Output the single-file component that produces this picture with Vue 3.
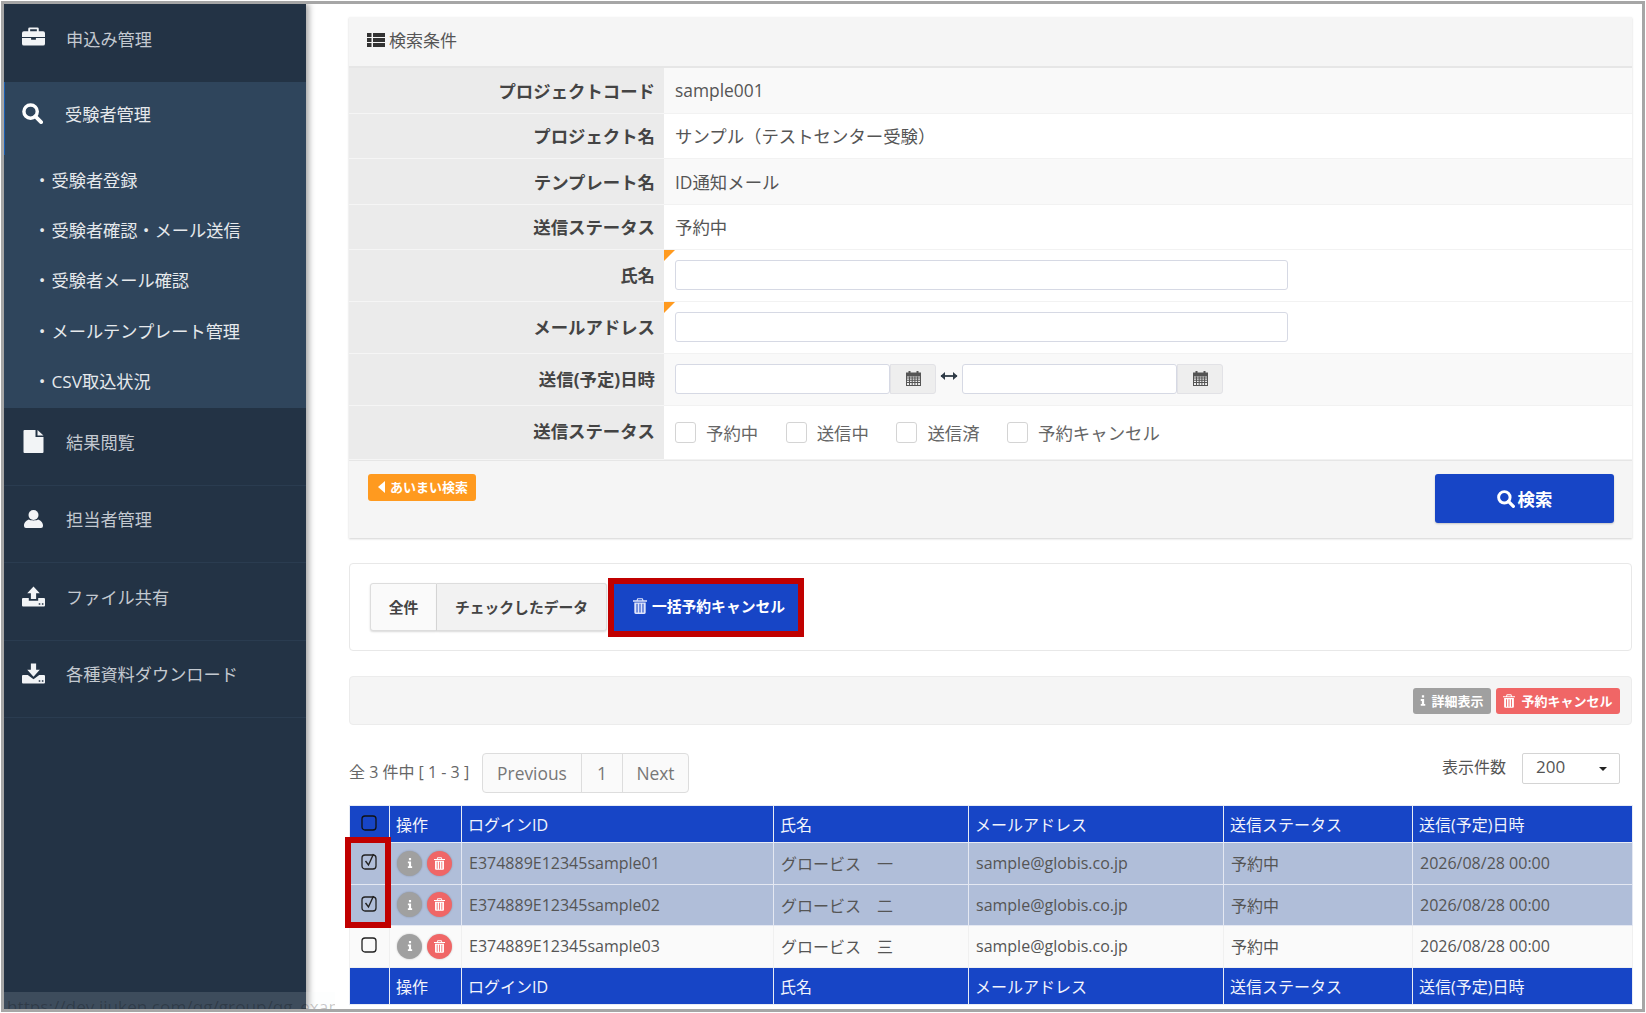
<template>
  <div class="frame">
    <svg class="defs" width="0" height="0" aria-hidden="true">
      <symbol id="i-briefcase" viewBox="0 0 24 19">
        <path fill="currentColor" fill-rule="evenodd" d="M8 0h8a1.5 1.5 0 0 1 1.5 1.5V4H22a2 2 0 0 1 2 2v4H0V6a2 2 0 0 1 2-2h4.500V1.500A1.500 1.500 0 0 1 8 0zm.5 2v2h7V2z" />
        <path fill="currentColor" d="M0 11h9.500v2h5v-2H24v6a2 2 0 0 1-2 2H2a2 2 0 0 1-2-2z" />
      </symbol>
      <symbol id="i-search" viewBox="0 0 22 22">
        <circle cx="9" cy="9" r="7" fill="none" stroke="currentColor" stroke-width="3.600" />
        <path d="M14 14l6 6" stroke="currentColor" stroke-width="4" stroke-linecap="round" />
      </symbol>
      <symbol id="i-file" viewBox="0 0 20 23">
        <path fill="currentColor" d="M1 0h11v7h8v15a1 1 0 0 1-1 1H1a1 1 0 0 1-1-1V1a1 1 0 0 1 1-1zm13 0l6 5.500h-6z" />
      </symbol>
      <symbol id="i-user" viewBox="0 0 19 18">
        <ellipse cx="9.500" cy="5" rx="5" ry="5" fill="currentColor" />
        <path fill="currentColor" d="M0 15.500C0 12 3 10 5 9.500c1.200 1.200 7.800 1.200 9 0 2 .5 5 2.500 5 6V16a2 2 0 0 1-2 2H2a2 2 0 0 1-2-2z" />
      </symbol>
      <symbol id="i-upload" viewBox="0 0 22 19">
        <path fill="currentColor" d="M11 0l6 6.500h-3.500V12h-5V6.500H5z" />
        <path fill="currentColor" fill-rule="evenodd" d="M1 11h5.500v2.500h9V11H21a1 1 0 0 1 1 1v6a1 1 0 0 1-1 1H1a1 1 0 0 1-1-1v-6a1 1 0 0 1 1-1zm15 5v1.300h1.500V16zm3 0v1.300h1.500V16z" />
      </symbol>
      <symbol id="i-download" viewBox="0 0 22 19">
        <path fill="currentColor" d="M11 12.500l6-6.500h-3.500V0h-5v6H5z" />
        <path fill="currentColor" fill-rule="evenodd" d="M1 11h4.500l5.500 4 5.500-4H21a1 1 0 0 1 1 1v6a1 1 0 0 1-1 1H1a1 1 0 0 1-1-1v-6a1 1 0 0 1 1-1zm15 5v1.300h1.500V16zm3 0v1.300h1.500V16z" />
      </symbol>
      <symbol id="i-list" viewBox="0 0 18 14">
        <path fill="currentColor" d="M0 0h4.500v4H0zm6 0h12v4H6zM0 5h4.500v4H0zm6 0h12v4H6zM0 10h4.500v4H0zm6 0h12v4H6z" />
      </symbol>
      <symbol id="i-calendar" viewBox="0 0 15 15">
        <path fill="currentColor" fill-rule="evenodd" d="M2.500 0h2v1.500h6V0h2v1.500H15V15H0V1.500h2.500zM1 5.500V14h13V5.500z" />
        <path fill="currentColor" d="M1 6.500h13v1H1zm0 2.200h13v1H1zm0 2.200h13v1H1zM3 5.500h1V14H3zm2.700 0h1V14h-1zm2.700 0h1V14h-1zm2.700 0h1V14h-1z" />
      </symbol>
      <symbol id="i-trash" viewBox="0 0 16 18">
        <path fill="currentColor" fill-rule="evenodd" d="M5 0h6l1 2.500h4V4H0V2.500h4zm.8 1.200l-.4 1.300h5.200l-.4-1.300z" />
        <path fill="currentColor" fill-rule="evenodd" d="M1.500 5h13v11.500a1.500 1.500 0 0 1-1.500 1.500H3a1.500 1.500 0 0 1-1.500-1.500zm2.500 1.500V16.500h1.200V6.500zm3.400 0V16.500h1.200V6.500zm3.400 0V16.500H12V6.500z" />
      </symbol>
      <symbol id="i-info" viewBox="0 0 8 14">
        <path fill="currentColor" d="M2.500 0h3v3h-3zM1 5h4.500v6.500H7V14H1v-2.500h1.500V7.500H1z" />
      </symbol>
    </svg>

    <aside class="sidebar">
      <nav>
        <a class="nav-item nav-first">
          <svg class="nav-icon icon-briefcase"><use href="#i-briefcase" /></svg>
          <span>申込み管理</span>
        </a>
        <div class="nav-group">
          <a class="nav-item nav-active">
            <svg class="nav-icon"><use href="#i-search" /></svg>
            <span>受験者管理</span>
          </a>
          <a v-for="s in subItems" :key="s" class="nav-sub">{{ s }}</a>
        </div>
        <a v-for="n in navItems" :key="n.label" class="nav-item nav-line">
          <svg class="nav-icon" :class="n.cls"><use :href="n.icon" /></svg>
          <span>{{ n.label }}</span>
        </a>
      </nav>
    </aside>

    <main class="main">
      <section class="search-panel">
        <header class="panel-head">
          <svg class="list-icon"><use href="#i-list" /></svg>
          <span>検索条件</span>
        </header>

        <div v-for="(r, i) in infoRows" :key="r.label" class="row row-text" :class="{ odd: i % 2 === 0 }">
          <div class="row-label">{{ r.label }}</div>
          <div class="row-value">{{ r.value }}</div>
        </div>

        <div class="row row-input">
          <div class="row-label">氏名</div>
          <div class="row-value has-flag"><input class="text-input" type="text" /></div>
        </div>
        <div class="row row-input">
          <div class="row-label">メールアドレス</div>
          <div class="row-value has-flag"><input class="text-input" type="text" /></div>
        </div>
        <div class="row row-input odd">
          <div class="row-label">送信(予定)日時</div>
          <div class="row-value date-range">
            <input class="date-input" type="text" />
            <span class="date-btn"><svg><use href="#i-calendar" /></svg></span>
            <svg class="range-arrow" viewBox="0 0 18 10">
              <path d="M1 5h16" stroke="#2f3b47" stroke-width="1.800" />
              <path d="M5 1L0.500 5 5 9zM13 1l4.500 4L13 9z" fill="#2f3b47" />
            </svg>
            <input class="date-input" type="text" />
            <span class="date-btn"><svg><use href="#i-calendar" /></svg></span>
          </div>
        </div>
        <div class="row row-check">
          <div class="row-label">送信ステータス</div>
          <div class="row-value checks">
            <label v-for="c in statusChecks" :key="c" class="check">
              <span class="check-box"></span>{{ c }}
            </label>
          </div>
        </div>

        <footer class="panel-foot">
          <span class="fuzzy-badge"><i class="caret-left"></i>あいまい検索</span>
          <button class="search-btn">
            <svg><use href="#i-search" /></svg>検索
          </button>
        </footer>
      </section>

      <section class="scope-panel">
        <button class="scope-btn scope-all">全件</button>
        <button class="scope-btn scope-checked">チェックしたデータ</button>
        <button class="bulk-btn">
          <svg><use href="#i-trash" /></svg>一括予約キャンセル
        </button>
      </section>

      <section class="legend-panel">
        <span class="legend legend-gray"><svg class="legend-info"><use href="#i-info" /></svg>詳細表示</span>
        <span class="legend legend-red"><svg class="legend-trash"><use href="#i-trash" /></svg>予約キャンセル</span>
      </section>

      <div class="pager-row">
        <span class="count">全 3 件中 [ 1 - 3 ]</span>
        <div class="pagination">
          <a class="page-prev">Previous</a>
          <a class="page-num">1</a>
          <a class="page-next">Next</a>
        </div>
        <div class="per-page">
          <span class="per-label">表示件数</span>
          <div class="select"><span class="select-value">200</span><i class="caret-down"></i></div>
        </div>
      </div>

      <div class="table-wrap">
        <table class="result">
          <colgroup>
            <col v-for="w in colWidths" :key="w.id" :style="{ width: w.px + 'px' }" />
          </colgroup>
          <thead>
            <tr>
              <th class="cell-check">
                <svg class="cb" viewBox="0 0 18 18"><rect x="2" y="3" width="14" height="14" rx="3" fill="none" stroke="#111" stroke-width="1.300" /></svg>
              </th>
              <th v-for="h in headers" :key="h">{{ h }}</th>
            </tr>
          </thead>
          <tbody>
            <tr v-for="r in rows" :key="r.id" :class="{ selected: r.selected }">
              <td class="cell-check">
                <svg class="cb" viewBox="0 0 18 18">
                  <rect x="2" y="3" width="14" height="14" rx="3" fill="none" stroke="#222" stroke-width="1.300" />
                  <path v-if="r.selected" d="M5.500 9l3 4 5-11" fill="none" stroke="#222" stroke-width="1.400" />
                </svg>
              </td>
              <td class="cell-ops">
                <span class="op op-info"><svg><use href="#i-info" /></svg></span>
                <span class="op op-del"><svg><use href="#i-trash" /></svg></span>
              </td>
              <td>{{ r.id }}</td>
              <td>{{ r.name }}</td>
              <td>sample@globis.co.jp</td>
              <td>予約中</td>
              <td>2026/08/28 00:00</td>
            </tr>
          </tbody>
          <tfoot>
            <tr>
              <th></th>
              <th v-for="h in headers" :key="h">{{ h }}</th>
            </tr>
          </tfoot>
        </table>
        <div class="check-highlight"></div>
      </div>
    </main>

    <div class="status-url">https://dev.jiuken.com/qg/group/qg_exam/</div>
  </div>
</template>

<script setup>
const subItems = ['受験者登録', '受験者確認・メール送信', '受験者メール確認', 'メールテンプレート管理', 'CSV取込状況']

const navItems = [
  { label: '結果閲覧', icon: '#i-file', cls: '' },
  { label: '担当者管理', icon: '#i-user', cls: 'icon-user' },
  { label: 'ファイル共有', icon: '#i-upload', cls: '' },
  { label: '各種資料ダウンロード', icon: '#i-download', cls: '' },
]

const infoRows = [
  { label: 'プロジェクトコード', value: 'sample001' },
  { label: 'プロジェクト名', value: 'サンプル（テストセンター受験）' },
  { label: 'テンプレート名', value: 'ID通知メール' },
  { label: '送信ステータス', value: '予約中' },
]

const statusChecks = ['予約中', '送信中', '送信済', '予約キャンセル']

const colWidths = [
  { id: 'check', px: 40 },
  { id: 'ops', px: 72 },
  { id: 'login', px: 312 },
  { id: 'name', px: 195 },
  { id: 'mail', px: 255 },
  { id: 'status', px: 189 },
  { id: 'date', px: 220 },
]

const headers = ['操作', 'ログインID', '氏名', 'メールアドレス', '送信ステータス', '送信(予定)日時']

const rows = [
  { id: 'E374889E12345sample01', name: 'グロービス　一', selected: true },
  { id: 'E374889E12345sample02', name: 'グロービス　二', selected: true },
  { id: 'E374889E12345sample03', name: 'グロービス　三', selected: false },
]
</script>

<style>
html,
body {
  margin: 0;
  background: #fff;
}
</style>

<style scoped>
.frame {
  position: relative;
  box-sizing: border-box;
  width: 1644px;
  height: 1011px;
  margin: 1px;
  border: 3px solid #a6a6a6;
  display: flex;
  overflow: hidden;
  background: #fff;
  font-family: "Open Sans", "Noto Sans CJK JP", sans-serif;
  font-size: 17.400px;
  color: #555;
}

.defs {
  position: absolute;
}

/* sidebar */
.sidebar {
  flex: none;
  width: 302px;
  background: #233345;
  box-shadow: 3px 0 6px rgba(0, 0, 0, 0.35);
  z-index: 1;
  font-size: 17.200px;
}

.nav-item {
  box-sizing: border-box;
  display: flex;
  align-items: center;
  height: 77.500px;
  padding: 0 0 10px 18px;
  color: #c3c9d0;
}

.nav-first {
  height: 78px;
}

.nav-line {
  border-bottom: 1px solid #2a3c50;
}

.nav-icon {
  flex: none;
  width: 23px;
  height: 23px;
  margin-right: 21px;
  color: #f2f4f6;
}

.icon-briefcase {
  margin-top: -3px;
}

.icon-user {
  width: 19px;
  height: 18px;
  margin-left: 2px;
  margin-right: 23px;
}

.nav-group {
  background: #2f455c;
  height: 326px;
}

.nav-active {
  height: 73px;
  padding-bottom: 10px;
  color: #e6e9ec;
  border-left: 1px solid #1a5fb4;
  padding-left: 17px;
}

.nav-active .nav-icon {
  width: 21px;
  height: 21px;
  margin-right: 22px;
  color: #fff;
}

.nav-sub {
  box-sizing: border-box;
  display: flex;
  align-items: center;
  height: 50.200px;
  padding: 0 0 1px 29.500px;
  color: #e6e9ec;
}

.nav-sub::before {
  content: "・";
  width: 18px;
}

/* main column */
.main {
  flex: 1;
  min-width: 0;
  padding: 13px 10px 0 43px;
}

.search-panel {
  background: #f5f5f5;
  box-shadow: 0 1px 2px rgba(0, 0, 0, 0.18);
}

.panel-head {
  box-sizing: border-box;
  display: flex;
  align-items: center;
  height: 51px;
  padding: 0 18px 4px;
  border-bottom: 2px solid #e6e6e6;
  color: #555;
  font-size: 17px;
}

.list-icon {
  width: 18px;
  height: 14px;
  margin-right: 4px;
  color: #333;
}

.row {
  box-sizing: border-box;
  display: grid;
  grid-template-columns: 315px 1fr;
  background: #fff;
}

.row.odd {
  background: #f9f9f9;
}

.row-text {
  height: 45.500px;
}

.row-input {
  height: 52px;
}

.row-check {
  height: 54px;
}

.row-label {
  display: flex;
  align-items: center;
  justify-content: flex-end;
  padding-right: 9px;
  background: #ebebeb;
  border-bottom: 1px solid #f5f5f5;
  font-weight: 700;
  color: #444;
}

.row-value {
  position: relative;
  display: flex;
  align-items: center;
  padding-left: 11px;
  border-bottom: 1px solid #f2f2f2;
}

.row-input .row-label,
.row-input .row-value {
  padding-bottom: 2px;
}

.row-check .row-label {
  padding-bottom: 4px;
}

.has-flag::before {
  content: "";
  position: absolute;
  left: 0;
  top: 0;
  border-top: 11px solid #ff9a1f;
  border-right: 11px solid transparent;
}

.text-input,
.date-input {
  box-sizing: border-box;
  height: 30px;
  padding: 0 8px;
  background: #fff;
  border: 1px solid #d6d9e4;
  border-radius: 3px;
  outline: none;
}

.text-input {
  width: 613px;
}

.date-input {
  width: 215px;
}

.date-btn {
  box-sizing: border-box;
  display: flex;
  align-items: center;
  justify-content: center;
  width: 46px;
  height: 30px;
  background: #eee;
  border: 1px solid #e2e2e6;
  border-radius: 0 3px 3px 0;
  color: #555;
}

.date-btn svg {
  width: 15px;
  height: 15px;
}

.range-arrow {
  width: 18px;
  height: 10px;
  margin: -6px 4px 0 4px;
}

.checks {
  gap: 27.500px;
}

.check {
  display: flex;
  align-items: center;
  color: #666;
}

.check-box {
  box-sizing: border-box;
  width: 21px;
  height: 21px;
  margin-right: 10px;
  background: #fff;
  border: 1px solid #d4d4d4;
  border-radius: 3px;
}

.panel-foot {
  box-sizing: border-box;
  display: flex;
  justify-content: space-between;
  align-items: flex-start;
  height: 78px;
  padding: 13px 18px 0 19px;
  border-top: 1px solid #e6e6e6;
}

.fuzzy-badge {
  display: flex;
  align-items: center;
  height: 27px;
  padding: 0 8px 2px 10px;
  box-sizing: border-box;
  background: #ff9a1f;
  border-radius: 3px;
  color: #fff;
  font-size: 13px;
  font-weight: 700;
}

.caret-left {
  width: 0;
  height: 0;
  margin-right: 5px;
  border-top: 6px solid transparent;
  border-bottom: 6px solid transparent;
  border-right: 7px solid #fff;
}

.search-btn {
  display: flex;
  align-items: center;
  justify-content: center;
  width: 179px;
  height: 49px;
  background: #1745c6;
  border: 0;
  border-radius: 3px;
  color: #fff;
  font: inherit;
  font-weight: 700;
  box-shadow: 0 1px 2px rgba(0, 0, 0, 0.2);
}

.search-btn svg {
  width: 18px;
  height: 18px;
  margin-right: 3px;
}

.scope-panel {
  box-sizing: border-box;
  display: flex;
  align-items: center;
  height: 88px;
  margin-top: 25px;
  padding-left: 20px;
  background: #fff;
  border: 1px solid #e8e8e8;
  border-radius: 4px;
}

.scope-btn {
  height: 48px;
  padding: 0 0 2px;
  border: 1px solid #ddd;
  font: inherit;
  font-size: 14.800px;
  font-weight: 700;
  color: #444;
  box-shadow: 0 1px 2px rgba(0, 0, 0, 0.15);
}

.scope-all {
  width: 67px;
  background: #fafafa;
  border-radius: 3px 0 0 3px;
}

.scope-checked {
  width: 170px;
  background: #f2f2f2;
  border-left: 0;
  border-radius: 0 3px 3px 0;
}

.bulk-btn {
  box-sizing: border-box;
  display: flex;
  align-items: center;
  justify-content: center;
  width: 196px;
  height: 59px;
  margin-left: 1px;
  padding: 0 0 3px 6px;
  background: #1745c6;
  border: 6px solid #c00000;
  color: #fff;
  font: inherit;
  font-size: 14.800px;
  font-weight: 700;
}

.bulk-btn svg {
  width: 14px;
  height: 16px;
  margin-right: 5px;
  color: #dfe4fa;
}

.legend-panel {
  box-sizing: border-box;
  display: flex;
  align-items: center;
  justify-content: flex-end;
  gap: 5px;
  height: 49px;
  margin-top: 25px;
  padding-right: 11px;
  background: #f5f5f5;
  border: 1px solid #ececec;
  border-radius: 4px;
}

.legend {
  display: flex;
  align-items: center;
  justify-content: center;
  height: 26px;
  border-radius: 3px;
  color: #fff;
  font-size: 13px;
  font-weight: 700;
}

.legend-gray {
  width: 78px;
  background: #a0a0a0;
}

.legend-red {
  width: 124px;
  background: #f06666;
}

.legend-info {
  width: 6px;
  height: 11px;
  margin-right: 5px;
}

.legend-trash {
  width: 12px;
  height: 14px;
  margin-right: 6px;
}

.pager-row {
  display: flex;
  align-items: center;
  height: 40px;
  margin-top: 28px;
}

.count {
  width: 133px;
  padding-bottom: 4px;
  font-size: 16px;
  color: #666;
}

.pagination {
  display: flex;
  box-sizing: border-box;
  height: 40px;
  background: #fafafa;
  border: 1px solid #ddd;
  border-radius: 4px;
  color: #777;
  line-height: 38px;
  text-align: center;
}

.page-prev {
  width: 98px;
  border-right: 1px solid #ddd;
}

.page-num {
  width: 40px;
  border-right: 1px solid #ddd;
}

.page-next {
  width: 65px;
}

.per-page {
  display: flex;
  align-items: center;
  align-self: flex-start;
  margin-left: auto;
  margin-right: 12px;
  font-size: 16px;
  color: #555;
}

.per-label {
  padding-bottom: 6px;
}

.select {
  box-sizing: border-box;
  display: flex;
  align-items: center;
  justify-content: space-between;
  width: 98px;
  height: 31px;
  margin-left: 16px;
  padding: 0 12px 0 13px;
  background: #fff;
  border: 1px solid #d4d4d4;
  border-radius: 2px;
  font-size: 17px;
}

.select-value {
  padding-bottom: 4px;
}

.caret-down {
  width: 0;
  height: 0;
  border-left: 4.500px solid transparent;
  border-right: 4.500px solid transparent;
  border-top: 4px solid #222;
}

.table-wrap {
  position: relative;
  margin-top: 12px;
}

.result {
  width: 1283px;
  table-layout: fixed;
  border-collapse: collapse;
  font-size: 16px;
}

.result th {
  height: 35px;
  padding: 0 6px 1px;
  background: #1745c6;
  border: 1px solid #e8ecf5;
  color: #f2f4fc;
  font-weight: 400;
  text-align: left;
}

.result td {
  height: 40px;
  padding: 0 7px 1px;
  background: #fafafa;
  border: 1px solid #f0f0f0;
  color: #555;
}

.result tbody tr:nth-child(2) td {
  height: 39px;
}

.result tr.selected td {
  background: #b0bed9;
  border-color: #e4e8f2;
}

.cell-check {
  text-align: center !important;
}

.cb {
  display: block;
  width: 18px;
  height: 18px;
  margin: -4px auto 0;
  transform: translateX(-1px);
}

.cell-ops {
  white-space: nowrap;
}

.op {
  display: inline-flex;
  align-items: center;
  justify-content: center;
  width: 25px;
  height: 25px;
  border-radius: 50%;
  color: #fff;
  vertical-align: middle;
  box-shadow: 0 0 2px rgba(0, 0, 0, 0.25);
}

.op-info {
  background: #a0a0a0;
}

.op-del {
  margin-left: 5px;
  background: #f06666;
}

.op-info svg {
  width: 6px;
  height: 10px;
}

.op-del svg {
  width: 11px;
  height: 13px;
}

.check-highlight {
  position: absolute;
  left: -4px;
  top: 32px;
  box-sizing: border-box;
  width: 46px;
  height: 91px;
  border: 6px solid #c00000;
  pointer-events: none;
}

.status-url {
  position: absolute;
  left: 0;
  bottom: 0;
  width: 328px;
  height: 17px;
  padding-left: 3px;
  overflow: hidden;
  background: rgba(240, 245, 250, 0.13);
  color: rgba(0, 0, 0, 0.22);
  font-size: 17.200px;
  line-height: 30px;
  white-space: nowrap;
  z-index: 2;
}
</style>
